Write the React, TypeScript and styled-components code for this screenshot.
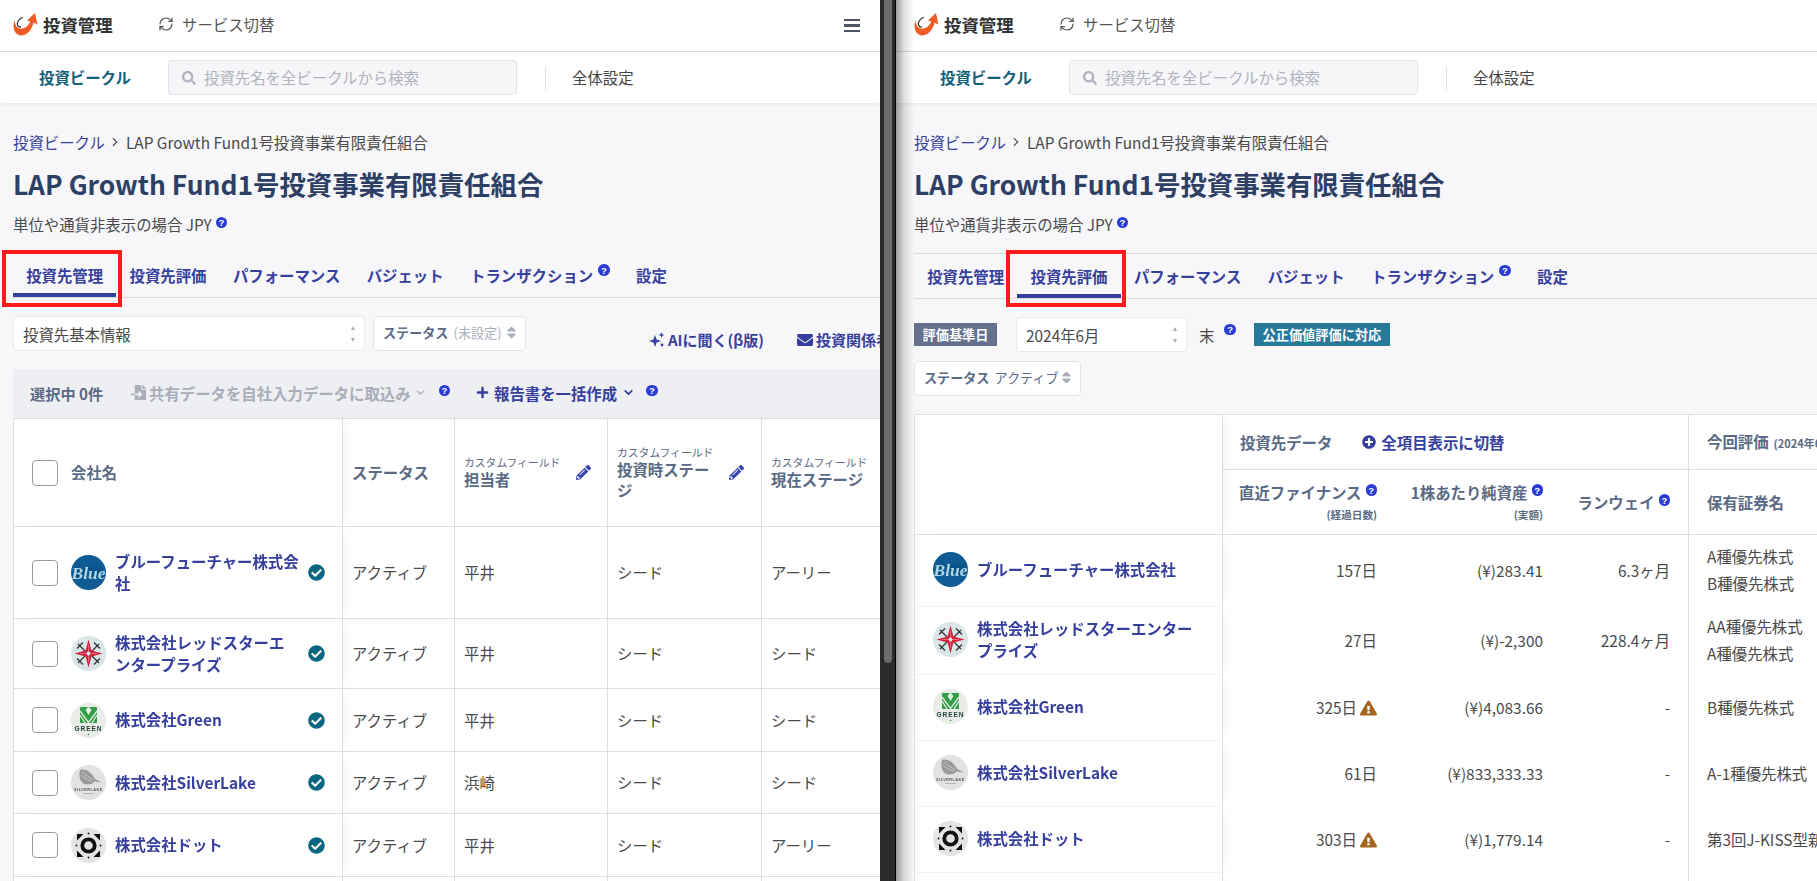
import React from "react";
import styled, { createGlobalStyle } from "styled-components";
import { RefreshCw, ChevronRight, ChevronDown } from "lucide-react";
import { FaCheckCircle, FaPencilAlt, FaExclamationTriangle, FaSearch, FaEnvelope, FaPlus, FaPlusCircle, FaSort, FaFileImport } from "react-icons/fa";

const Global = createGlobalStyle`
  html, body { margin: 0; padding: 0; background: #2b2b2b; overflow: hidden; }
  * { box-sizing: border-box; }
  body { font-family: "Noto Sans CJK JP", "Noto Sans", sans-serif; font-size: 15.4px; color: #4a4a4a; }
`;

const Page = styled.div`display: flex; width: 1817px; height: 881px; background: #2b2b2b; overflow: hidden;`;
const Panel = styled.section<{ $w: number; $shade?: boolean }>`
  position: relative; flex: none; width: ${p => p.$w}px; height: 881px; overflow: hidden; background: #f7f7fa;
  ${p => p.$shade ? `&::before { content: ""; position: absolute; z-index: 6; left: 0; top: 0; bottom: 0; width: 18px; background: linear-gradient(90deg, rgba(0,0,0,.38), rgba(0,0,0,.12) 45%, rgba(0,0,0,0)); }` : ""}
`;
const Divider = styled.div`flex: none; width: 16px; height: 881px; padding-left: 4px; background: #2b2b2b; border-right: 1px solid #000;`;
const Thumb = styled.div`width: 8px; height: 663px; border-radius: 0 0 4px 4px; background: #6b6b6b;`;

const TopBar = styled.header<{ $inset: number }>`
  display: flex; align-items: center; height: 52px; padding: 0 20px 2px ${p => p.$inset}px; background: #fff; border-bottom: 1px solid #ddd;
`;
const Brand = styled.div`display: flex; align-items: center; gap: 5px; width: 145px; font-size: 17.4px; font-weight: 700; color: #333;`;
const Switch = styled.div`display: flex; align-items: center; gap: 8px; margin-top: -2px; color: #555; svg { width: 16px; height: 16px; color: #555; }`;
const Burger = styled.div`margin: 2px 0 0 auto; width: 16px; height: 13px; border-top: 2.5px solid #4d5566; border-bottom: 2.5px solid #4d5566; display: flex; align-items: center; &::after { content: ""; display: block; width: 100%; height: 2.5px; background: #4d5566; }`;

const SubBar = styled.nav<{ $inset: number }>`
  display: flex; align-items: center; height: 51px; padding-left: ${p => p.$inset + 26}px; background: #fff; box-shadow: 0 1px 3px rgba(0,0,0,.08); position: relative;
`;
const SubActive = styled.div`font-weight: 700; color: #145f78; width: 129px; padding-bottom: 2px;`;
const Search = styled.div`display: flex; align-items: center; gap: 8px; width: 349px; height: 35px; padding: 0 0 2px 13px; background: #f6f6f9; border: 1px solid #e2e3ea; border-radius: 4px; color: #b0b3bd; svg { width: 14px; height: 14px; color: #b0b3bd; margin-top: 2px; }`;
const SubSep = styled.span`width: 1px; height: 24px; margin: 0 26px 0 28px; background: #e2e2e2;`;
const SubLink = styled.span`color: #444; padding-bottom: 2px;`;

const Content = styled.main<{ $inset: number }>`padding: 28px 0 0 ${p => p.$inset}px;`;
const Crumbs = styled.div`display: flex; align-items: center; line-height: 22px; color: #4a4a4a; svg { width: 14px; height: 14px; margin: 0 4px 0 3px; color: #555; }`;
const CrumbLink = styled.span`color: #373f9e;`;
const Title = styled.h1`margin: 13px 0 0; font-size: 26.4px; line-height: 36px; font-weight: 700; color: #2e3f66;`;
const Unit = styled.p`margin: 11px 0 0; line-height: 22px; color: #4a4a4a;`;
const Help = styled.span<{ $ml?: number; $up?: number }>`
  display: inline-flex; align-items: center; justify-content: center; width: 11.5px; height: 11.5px; margin-left: ${p => p.$ml ?? 4}px; border-radius: 50%; background: #2a3bd6; color: #fff;
  font-family: "Liberation Sans", sans-serif; font-size: 9.5px; font-weight: 700; line-height: 11px; transform: translateY(-${p => p.$up ?? 5}px); flex: none;
`;
const TabBar = styled.div<{ $ruled?: boolean }>`
  display: flex; height: ${p => p.$ruled ? 46 : 45}px; margin-top: 18px; border-top: 1px solid ${p => p.$ruled ? "#ddd" : "transparent"}; border-bottom: 1px solid #ddd;
`;
const Tab = styled.div<{ $on?: boolean }>`
  display: flex; align-items: center; padding: 3px 13.2px 0; font-weight: 700; color: #373f9e; white-space: nowrap;
  border-bottom: 4px solid ${p => p.$on ? "#373f9e" : "transparent"};
`;
const RedFrame = styled.div<{ $x: number }>`position: absolute; z-index: 8; left: ${p => p.$x}px; top: 250px; width: 120px; height: 57px; border: 4px solid #ff1a1a;`;

const FilterRow = styled.div`display: flex; align-items: center; margin-top: 18px; height: 35px; white-space: nowrap;`;
const Select = styled.div<{ $w: number }>`
  display: flex; align-items: center; justify-content: space-between; flex: none; width: ${p => p.$w}px; height: 35px; padding: 0 9px; background: #fff; border: 1px solid #e8e8ee; border-radius: 4px; color: #4a4a4a;
`;
const Spin = styled.span`display: flex; flex-direction: column; gap: 8px; &::before, &::after { content: ""; border-left: 2.5px solid transparent; border-right: 2.5px solid transparent; } &::before { border-bottom: 4px solid #aab; } &::after { border-top: 4px solid #aab; }`;
const Chip = styled.div<{ $w: number; $ml?: number; $mt?: number }>`
  display: flex; align-items: center; justify-content: space-between; flex: none; width: ${p => p.$w}px; height: 35px; margin-left: ${p => p.$ml ?? 0}px; margin-top: ${p => p.$mt ?? 0}px; padding: 0 8px 2px 9px; background: #fff; border: 1px solid #e3e4ea; border-radius: 4px; font-size: 13.1px; color: #5a6a85; svg { width: 11px; height: 15px; color: #a9aebb; }
`;
const ChipLabel = styled.b`font-weight: 700; color: #5a6a85;`;
const ChipVal = styled.span<{ $dim?: boolean }>`margin-left: 5px; color: ${p => p.$dim ? "#aab0bd" : "#5a6a85"};`;
const ActionLink = styled.div<{ $ml: number }>`
  display: flex; align-items: center; gap: 3px; flex: none; margin-left: ${p => p.$ml}px; padding-top: 12px; font-weight: 700; font-size: 15px; color: #373f9e; svg { flex: none; }
`;
const Toolbar = styled.div`display: flex; align-items: center; height: 50px; margin-top: 18px; padding: 0 0 2px 17px; background: #eeeff2; border-bottom: 1px solid #ddd; font-weight: 700; white-space: nowrap;`;
const Count = styled.span`width: 101px; color: #5a6a85; font-size: 15.2px;`;
const Disabled = styled.span`display: flex; align-items: center; gap: 3px; color: #a9adba; width: 345px; svg { flex: none; }`;
const Bulk = styled.span`display: flex; align-items: center; gap: 5px; color: #373f9e; svg { flex: none; }`;

const TableWrap = styled.div<{ $mt?: number }>`overflow: hidden; margin-top: ${p => p.$mt ?? 0}px;`;
const Table = styled.table<{ $w: number }>`table-layout: fixed; width: ${p => p.$w}px; border-collapse: separate; border-spacing: 0; background: #fff;`;
const Row = styled.tr<{ $h: number }>`height: ${p => p.$h}px;`;
const fixedShadow = "position: sticky; left: 0; z-index: 2; border-left: 1px solid #ddd; box-shadow: 8px 0 10px -7px rgba(0,0,0,.07);";
const Th = styled.th<{ $fixed?: boolean; $align?: string; $top?: boolean; $noRule?: boolean; $pl?: number; $pr?: number }>`
  padding: 0 ${p => p.$pr ?? 9}px 0 ${p => p.$pl ?? 9}px; text-align: ${p => p.$align ?? "left"}; vertical-align: middle; font-weight: 700; color: #5a6a85; line-height: 21px; background: #fff;
  border-right: ${p => p.$noRule ? "0" : "1px solid #ddd"}; border-bottom: 1px solid #ddd; ${p => p.$top ? "border-top: 1px solid #ddd;" : ""}
  ${p => p.$fixed ? fixedShadow : ""}
`;
const Td = styled.td<{ $fixed?: boolean }>`
  padding: 0 9px; vertical-align: middle; color: #4a4a4a; line-height: 21px; background: #fff; border-right: 1px solid #ddd; border-bottom: 1px solid #ddd;
  ${p => p.$fixed ? fixedShadow : ""}
`;
const SoftTd = styled.td<{ $fixed?: boolean; $align?: string; $ruled?: boolean }>`
  padding: ${p => p.$fixed ? "0 0 2px 18px" : "0 18px 2px"}; vertical-align: middle; text-align: ${p => p.$align ?? "left"}; color: #4a4a4a; line-height: 27px; background: #fff; white-space: ${p => p.$fixed ? "normal" : "nowrap"};
  ${p => p.$ruled ? "border-right: 1px solid #ddd;" : ""}
  ${p => p.$fixed ? `${fixedShadow} border-right: 1px solid #ddd; border-bottom: 1px solid #f1f1f4;` : ""}
`;
const NameCell = styled.div<{ $pad: number }>`display: flex; align-items: center; padding-left: ${p => p.$pad}px;`;
const Check = styled.span`flex: none; display: block; width: 26px; height: 26px; margin-right: 13px; background: #fff; border: 1px solid #9a9a9a; border-radius: 4px;`;
const LogoBox = styled.span`flex: none; display: block; width: 35px; height: 35px; margin-right: 9px; svg { display: block; }`;
const Name = styled.a<{ $w: number }>`display: block; flex: none; width: ${p => p.$w}px; font-weight: 700; color: #373f9e; line-height: 21.5px; white-space: pre-line;`;
const Verified = styled.span`flex: none; display: flex; margin-left: 6px; color: #0a6580; svg { width: 17px; height: 17px; }`;
const HeadLabel = styled.div`display: flex; align-items: center;`;
const Small = styled.div`font-size: 10.8px; line-height: 14px; font-weight: 400; color: #5a6a85; white-space: nowrap;`;
const FieldName = styled.div`width: 104px; flex: none; white-space: pre-line;`;
const Pen = styled.span`flex: none; display: flex; color: #3a46b0; margin-left: 8px; svg { width: 15px; height: 15px; }`;
const Badge = styled.span<{ $bg: string; $w: number; $mr?: number; $ml?: number }>`
  display: flex; align-items: center; justify-content: center; flex: none; width: ${p => p.$w}px; height: 23px; margin-right: ${p => p.$mr ?? 0}px; margin-left: ${p => p.$ml ?? 0}px; background: ${p => p.$bg}; color: #fff; font-size: 13.2px; font-weight: 700;
`;
const End = styled.span`margin-left: 12px; color: #4a4a4a;`;
const GroupAction = styled.span`display: inline-flex; align-items: center; gap: 5px; margin-left: 30px; color: #373f9e; vertical-align: top; svg { width: 14px; height: 14px; }`;
const Sub = styled.div`font-size: 10.6px; line-height: 16px; margin-top: 4px;`;
const Warn = styled.span`display: inline-flex; margin-left: 3px; color: #a3651f; vertical-align: -2px; svg { width: 17px; height: 16px; }`;
const Dim = styled.span`font-size: 11px; color: #5a6a85; margin-left: 5px;`;

const HLogo = () => (
  <svg width="25" height="23" viewBox="0 0 25 23">
    <path d="M1.7 7C-.6 12 0 22.4 8.5 22.4 15 22.4 19.5 15 20.6 9.5L24.4 11.7 22 0 14 7.5 17.3 8.6C15.5 13 11.5 16.5 7 15.6 3.5 15 1.5 11 1.7 7Z" fill="#f15a22" />
    <path d="M10 4.3C6 5.5 3.6 9.5 4.5 12 5 13.4 6.3 14.2 8 14.2" fill="none" stroke="#3a3a3a" strokeWidth="1.2" />
  </svg>
);

const Co = ({ k }: { k: string }) => {
  if (k === "blue") return (
    <svg width="35" height="35" viewBox="0 0 35 35">
      <circle cx="17.5" cy="17.5" r="17.5" fill="#0e5c93" />
      <path d="M3 12H32V24H3Z" fill="#0a4f82" opacity=".55" />
      <text x="17.5" y="23.5" textAnchor="middle" fontFamily="Liberation Serif, serif" fontStyle="italic" fontWeight="700" fontSize="17.5" fill="#aed8e8">Blue</text>
    </svg>
  );
  if (k === "red") return (
    <svg width="35" height="35" viewBox="0 0 35 35">
      <circle cx="17.5" cy="17.5" r="17.5" fill="#d9e5e6" />
      <path d="M7 8l7 7M28 8l-7 7M7 27l7-7M28 27l-7-7M12 6.5L6 12.5M23 6.5l6 6M12 28.5l-6-6M23 28.5l6-6" stroke="#2a2a2a" strokeWidth="1.1" fill="none" />
      <path d="M17.5 3.5L20.4 14.6 31.5 17.5 20.4 20.4 17.5 31.5 14.6 20.4 3.5 17.5 14.6 14.6Z" fill="#d61f3a" />
      <path d="M17.5 9V26M9 17.5H26" stroke="#f3b6bf" strokeWidth=".5" />
      <circle cx="17.5" cy="17.5" r="1.9" fill="#d9e5e6" />
    </svg>
  );
  if (k === "green") return (
    <svg width="35" height="35" viewBox="0 0 35 35">
      <circle cx="17.5" cy="17.5" r="17.5" fill="#e9ebe7" />
      <rect x="9" y="4" width="17" height="16" rx="1" fill="#2f9e44" />
      <path d="M17.5 3.5L20.5 7 17.5 12 14.5 7Z" fill="#e9ebe7" />
      <path d="M9 8L17.5 19.5 26 8M9 12L14 20M26 12L21 20" stroke="#e9ebe7" strokeWidth="1.3" fill="none" />
      <text x="17.5" y="28" textAnchor="middle" fontFamily="Liberation Sans, sans-serif" fontWeight="700" fontSize="6.6" letterSpacing=".9" fill="#24423a">GREEN</text>
      <circle cx="17.5" cy="31.5" r=".8" fill="#2f9e44" />
    </svg>
  );
  if (k === "silver") return (
    <svg width="35" height="35" viewBox="0 0 35 35">
      <circle cx="17.5" cy="17.5" r="17.5" fill="#e2e2e2" />
      <path d="M9 5C15 3 21 8 24 14L31 17.5 23.5 16.5C21 20 13 21 10 16 8 12.5 8 8 9 5Z" fill="#9a9a9a" />
      <path d="M11 7C14 10 18 12 22 14.5M10 10C13 13 17 15 21 16" stroke="#cfcfcf" strokeWidth=".8" fill="none" />
      <text x="17.5" y="25.5" textAnchor="middle" fontFamily="Liberation Sans, sans-serif" fontWeight="700" fontSize="3.8" letterSpacing=".5" fill="#555">SILVERLAKE</text>
      <rect x="12" y="28" width="11" height=".8" fill="#aaa" />
    </svg>
  );
  return (
    <svg width="35" height="35" viewBox="0 0 35 35">
      <circle cx="17.5" cy="17.5" r="17.5" fill="#e4e4e4" />
      <circle cx="17.5" cy="17.5" r="6.2" fill="none" stroke="#111" strokeWidth="3.8" />
      <path d="M6 6H12.5L6 12.5ZM29 6H22.5L29 12.5ZM6 29H12.5L6 22.5ZM29 29H22.5L29 22.5Z" fill="#111" />
      <circle cx="17.5" cy="5.5" r=".9" fill="#111" /><circle cx="17.5" cy="29.5" r=".9" fill="#111" /><circle cx="5.5" cy="17.5" r=".9" fill="#111" /><circle cx="29.5" cy="17.5" r=".9" fill="#111" />
    </svg>
  );
};

const Spark = () => (
  <svg width="16" height="16" viewBox="0 0 16 16" fill="#373f9e"><path d="M6 3l1.6 4.4L12 9 7.6 10.6 6 15 4.4 10.6 0 9 4.4 7.4z" /><path d="M12.5 0l.8 2.2 2.2.8-2.2.8-.8 2.2-.8-2.2L9.5 3l2.2-.8z" /><circle cx="13" cy="13" r="1.4" /></svg>
);

const leftRows = [
  { k: "blue", n: "ブルーフューチャー株式会\n社", who: "平井", a: "シード", b: "アーリー", h: 92 },
  { k: "red", n: "株式会社レッドスターエ\nンタープライズ", who: "平井", a: "シード", b: "シード", h: 70 },
  { k: "green", n: "株式会社Green", who: "平井", a: "シード", b: "シード", h: 63 },
  { k: "silver", n: "株式会社SilverLake", who: "浜崎", a: "シード", b: "シード", h: 62 },
  { k: "dot", n: "株式会社ドット", who: "平井", a: "シード", b: "アーリー", h: 63 },
];
const rightRows = [
  { k: "blue", n: "ブルーフューチャー株式会社", d: "157日", w: false, p: "(¥)283.41", r: "6.3ヶ月", s: ["A種優先株式", "B種優先株式"], h: 72 },
  { k: "red", n: "株式会社レッドスターエンター\nプライズ", d: "27日", w: false, p: "(¥)-2,300", r: "228.4ヶ月", s: ["AA種優先株式", "A種優先株式"], h: 68 },
  { k: "green", n: "株式会社Green", d: "325日", w: true, p: "(¥)4,083.66", r: "-", s: ["B種優先株式"], h: 66 },
  { k: "silver", n: "株式会社SilverLake", d: "61日", w: false, p: "(¥)833,333.33", r: "-", s: ["A-1種優先株式"], h: 66 },
  { k: "dot", n: "株式会社ドット", d: "303日", w: true, p: "(¥)1,779.14", r: "-", s: ["第3回J-KISS型新株予約権"], h: 66 },
];

const Chrome = ({ inset, burger }: { inset: number; burger?: boolean }) => (
  <>
    <TopBar $inset={inset}>
      <Brand><HLogo />投資管理</Brand>
      <Switch><RefreshCw strokeWidth={1.8} />サービス切替</Switch>
      {burger && <Burger />}
    </TopBar>
    <SubBar $inset={inset}>
      <SubActive>投資ビークル</SubActive>
      <Search><FaSearch />投資先名を全ビークルから検索</Search>
      <SubSep />
      <SubLink>全体設定</SubLink>
    </SubBar>
  </>
);
const Heading = () => (
  <>
    <Crumbs><CrumbLink>投資ビークル</CrumbLink><ChevronRight />LAP Growth Fund1号投資事業有限責任組合</Crumbs>
    <Title>LAP Growth Fund1号投資事業有限責任組合</Title>
    <Unit>単位や通貨非表示の場合 JPY<Help>?</Help></Unit>
  </>
);
const Tabs = ({ on, ruled }: { on: number; ruled?: boolean }) => (
  <TabBar $ruled={ruled}>
    {["投資先管理", "投資先評価", "パフォーマンス", "バジェット", "トランザクション", "設定"].map((t, i) => (
      <Tab key={t} $on={i === on}>{t}{i === 4 && <Help $ml={5}>?</Help>}</Tab>
    ))}
  </TabBar>
);

const Field = ({ label, pen }: { label: string; pen?: boolean }) => (
  <HeadLabel>
    <FieldName><Small>カスタムフィールド</Small>{label}</FieldName>
    {pen && <Pen><FaPencilAlt /></Pen>}
  </HeadLabel>
);

export default function App() {
  return (
    <Page>
      <Global />
      <Panel $w={880}>
        <Chrome inset={13} burger />
        <Content $inset={13}>
          <Heading />
          <Tabs on={0} />
          <FilterRow>
            <Select $w={352}>投資先基本情報<Spin /></Select>
            <Chip $w={153} $ml={8}><span><ChipLabel>ステータス</ChipLabel><ChipVal $dim>(未設定)</ChipVal></span><FaSort /></Chip>
            <ActionLink $ml={123}><Spark />AIに聞く(β版)</ActionLink>
            <ActionLink $ml={33}><FaEnvelope size={16} />投資関係者</ActionLink>
          </FilterRow>
          <Toolbar>
            <Count>選択中 0件</Count>
            <Disabled><FaFileImport size={15} />共有データを自社入力データに取込み<ChevronDown size={13} strokeWidth={2.5} /><Help $ml={9} $up={2}>?</Help></Disabled>
            <Bulk><FaPlus size={13} />報告書を一括作成<ChevronDown size={13} strokeWidth={3.2} /><Help $ml={6} $up={2}>?</Help></Bulk>
          </Toolbar>
          <TableWrap>
            <Table $w={945}>
              <colgroup><col width={330} /><col width={112} /><col width={153} /><col width={154} /><col width={196} /></colgroup>
              <thead>
                <Row $h={108}>
                  <Th $fixed><NameCell $pad={9}><Check />会社名</NameCell></Th>
                  <Th>ステータス</Th>
                  <Th><Field label="担当者" pen /></Th>
                  <Th><Field label={"投資時ステー\nジ"} pen /></Th>
                  <Th><Field label="現在ステージ" /></Th>
                </Row>
              </thead>
              <tbody>
                {leftRows.map(r => (
                  <Row key={r.k} $h={r.h}>
                    <Td $fixed>
                      <NameCell $pad={9}>
                        <Check /><LogoBox><Co k={r.k} /></LogoBox>
                        <Name $w={187}>{r.n}</Name>
                        <Verified><FaCheckCircle /></Verified>
                      </NameCell>
                    </Td>
                    <Td>アクティブ</Td><Td>{r.who}</Td><Td>{r.a}</Td><Td>{r.b}</Td>
                  </Row>
                ))}
                <Row $h={60}><Td $fixed /><Td /><Td /><Td /><Td /></Row>
              </tbody>
            </Table>
          </TableWrap>
        </Content>
        <RedFrame $x={2} />
      </Panel>
      <Divider><Thumb /></Divider>
      <Panel $w={921} $shade>
        <Chrome inset={18} />
        <Content $inset={18}>
          <Heading />
          <Tabs on={1} ruled />
          <FilterRow>
            <Badge $bg="#64708c" $w={83} $mr={19}>評価基準日</Badge>
            <Select $w={171}>2024年6月<Spin /></Select>
            <End>末</End><Help $ml={10}>?</Help>
            <Badge $bg="#27799a" $w={136} $ml={18}>公正価値評価に対応</Badge>
          </FilterRow>
          <Chip $w={167} $mt={9}><span><ChipLabel>ステータス</ChipLabel><ChipVal>アクティブ</ChipVal></span><FaSort /></Chip>
          <TableWrap $mt={18}>
            <Table $w={975}>
              <colgroup><col width={309} /><col width={172} /><col width={166} /><col width={128} /><col width={200} /></colgroup>
              <thead>
                <Row $h={56}>
                  <Th $fixed $top rowSpan={2} />
                  <Th $top colSpan={3} $pl={17}>投資先データ<GroupAction><FaPlusCircle />全項目表示に切替</GroupAction></Th>
                  <Th $top $pl={18} $noRule>今回評価<Dim>(2024年6月末)</Dim></Th>
                </Row>
                <Row $h={65}>
                  <Th $align="right" $noRule $pr={18}>直近ファイナンス<Help>?</Help><Sub>(経過日数)</Sub></Th>
                  <Th $align="right" $noRule $pr={18}>1株あたり純資産<Help>?</Help><Sub>(実額)</Sub></Th>
                  <Th $align="right" $pr={18}>ランウェイ<Help>?</Help></Th>
                  <Th $pl={18} $noRule>保有証券名</Th>
                </Row>
              </thead>
              <tbody>
                {rightRows.map(r => (
                  <Row key={r.k} $h={r.h}>
                    <SoftTd $fixed>
                      <NameCell $pad={0}><LogoBox><Co k={r.k} /></LogoBox><Name $w={222}>{r.n}</Name></NameCell>
                    </SoftTd>
                    <SoftTd $align="right">{r.d}{r.w && <Warn><FaExclamationTriangle /></Warn>}</SoftTd>
                    <SoftTd $align="right">{r.p}</SoftTd>
                    <SoftTd $align="right" $ruled>{r.r}</SoftTd>
                    <SoftTd>{r.s.map(x => <div key={x}>{x}</div>)}</SoftTd>
                  </Row>
                ))}
                <Row $h={60}><SoftTd $fixed /><SoftTd /><SoftTd /><SoftTd $ruled /><SoftTd /></Row>
              </tbody>
            </Table>
          </TableWrap>
        </Content>
        <RedFrame $x={110} />
      </Panel>
    </Page>
  );
}
